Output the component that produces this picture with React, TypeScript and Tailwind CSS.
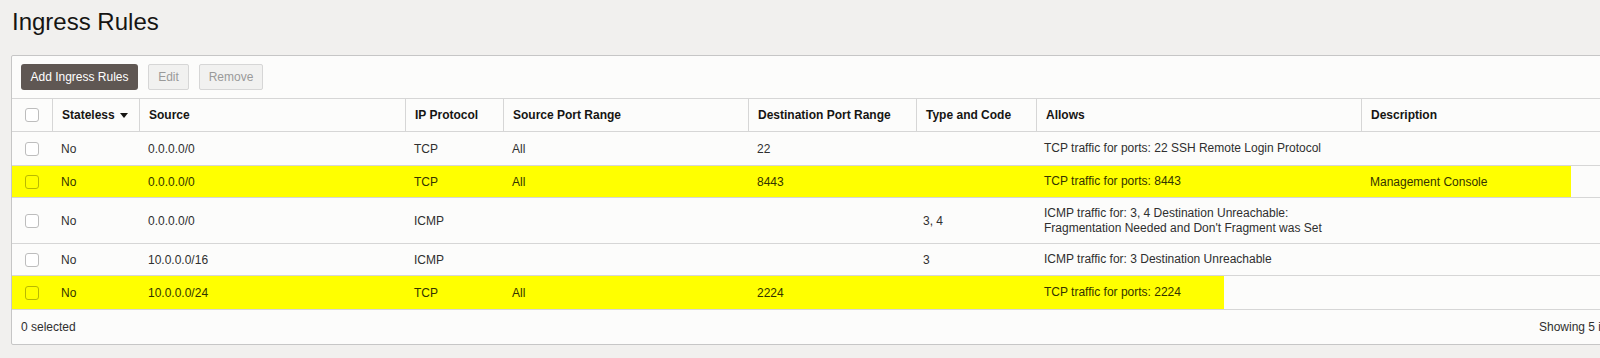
import React from "react";

type Row = {
  stateless: string;
  source: string;
  proto: string;
  spr: string;
  dpr: string;
  tc: string;
  allows: string[];
  desc: string;
  hl?: "a" | "b";
  h: string;
};

const rows: Row[] = [
  { stateless: "No", source: "0.0.0.0/0", proto: "TCP", spr: "All", dpr: "22", tc: "", allows: ["TCP traffic for ports: 22 SSH Remote Login Protocol"], desc: "", h: "h-[34px]" },
  { stateless: "No", source: "0.0.0.0/0", proto: "TCP", spr: "All", dpr: "8443", tc: "", allows: ["TCP traffic for ports: 8443"], desc: "Management Console", hl: "a", h: "h-[32px]" },
  { stateless: "No", source: "0.0.0.0/0", proto: "ICMP", spr: "", dpr: "", tc: "3, 4", allows: ["ICMP traffic for: 3, 4 Destination Unreachable:", "Fragmentation Needed and Don't Fragment was Set"], desc: "", h: "h-[46px]" },
  { stateless: "No", source: "10.0.0.0/16", proto: "ICMP", spr: "", dpr: "", tc: "3", allows: ["ICMP traffic for: 3 Destination Unreachable"], desc: "", h: "h-[32px]" },
  { stateless: "No", source: "10.0.0.0/24", proto: "TCP", spr: "All", dpr: "2224", tc: "", allows: ["TCP traffic for ports: 2224"], desc: "", hl: "b", h: "h-[34px]" },
];

const grid = "grid grid-cols-[40px_87px_266px_98px_245px_168px_120px_325px_276px]";

function Checkbox({ hl }: { hl?: boolean }) {
  return (
    <div
      className={
        "w-[14px] h-[14px] rounded-[3px] border " +
        (hl ? "border-[#b9b900] bg-transparent" : "border-[#bdbdbd] bg-white")
      }
    />
  );
}

export default function App() {
  const headers = [
    "Source",
    "IP Protocol",
    "Source Port Range",
    "Destination Port Range",
    "Type and Code",
    "Allows",
    "Description",
  ];
  return (
    <div className="w-[1600px] h-[358px] overflow-hidden bg-[#f1f0ee] font-['Liberation_Sans',Arial,sans-serif] text-[12px] text-[#2f2f2f]">
      <div className="pl-[11px] pt-[6px]">
        <h1 className="text-[24px] leading-[32px] text-[#161513] pl-[1px] font-normal">Ingress Rules</h1>
        <div className="mt-[17px] w-[1627px] border border-[#c6c6c6] rounded-[2px] bg-[#fcfcfb]">
          <div className="h-[42px] flex items-start pt-[8px] pl-[9px] gap-[10px]">
            <button className="h-[26px] w-[117px] rounded-[3px] bg-[#5f5753] text-white text-[12px] leading-[26px]">
              Add Ingress Rules
            </button>
            <button className="h-[26px] w-[41px] rounded-[2px] border border-[#d6d6d6] bg-[#f1f1f0] text-[#9a9a9a] text-[12px]">
              Edit
            </button>
            <button className="h-[26px] w-[64px] rounded-[2px] border border-[#d6d6d6] bg-[#f1f1f0] text-[#9a9a9a] text-[12px]">
              Remove
            </button>
          </div>
          <div className={grid + " h-[34px] border-t border-b border-[#d6d6d6] font-bold text-[#161513]"}>
            <div className="flex items-center justify-center">
              <Checkbox />
            </div>
            <div className="flex items-center border-l border-[#d6d6d6] pl-[9px]">
              Stateless
              <svg width="8" height="5" viewBox="0 0 8 5" className="ml-[5px]">
                <polygon points="0,0 8,0 4,5" fill="#161513" />
              </svg>
            </div>
            {headers.map((h) => (
              <div key={h} className="flex items-center border-l border-[#d6d6d6] pl-[9px]">
                {h}
              </div>
            ))}
          </div>
          {rows.map((r, i) => {
            const hlBg =
              r.hl === "a"
                ? "bg-[linear-gradient(to_right,#ffff00_1559px,transparent_1559px)] text-[#333300]"
                : r.hl === "b"
                ? "bg-[linear-gradient(to_right,#ffff00_1212px,transparent_1212px)] text-[#333300]"
                : "";
            return (
              <div key={i} className={grid + " border-b border-[#d6d6d6] " + r.h + " " + hlBg}>
                <div className="flex items-center justify-center">
                  <Checkbox hl={!!r.hl} />
                </div>
                <div className="flex items-center pl-[9px]">{r.stateless}</div>
                <div className="flex items-center pl-[9px]">{r.source}</div>
                <div className="flex items-center pl-[9px]">{r.proto}</div>
                <div className="flex items-center pl-[9px]">{r.spr}</div>
                <div className="flex items-center pl-[9px]">{r.dpr}</div>
                <div className="flex items-center pl-[7px]">{r.tc}</div>
                <div className="flex flex-col justify-center pl-[8px] leading-[15px]">
                  {r.allows.map((a) => (
                    <div key={a}>{a}</div>
                  ))}
                </div>
                <div className="flex items-center pl-[9px]">{r.desc}</div>
              </div>
            );
          })}
          <div className="h-[34px] flex items-center justify-between pl-[9px] pr-[10px]">
            <span>0 selected</span>
            <span>Showing 5 items</span>
          </div>
        </div>
      </div>
    </div>
  );
}
